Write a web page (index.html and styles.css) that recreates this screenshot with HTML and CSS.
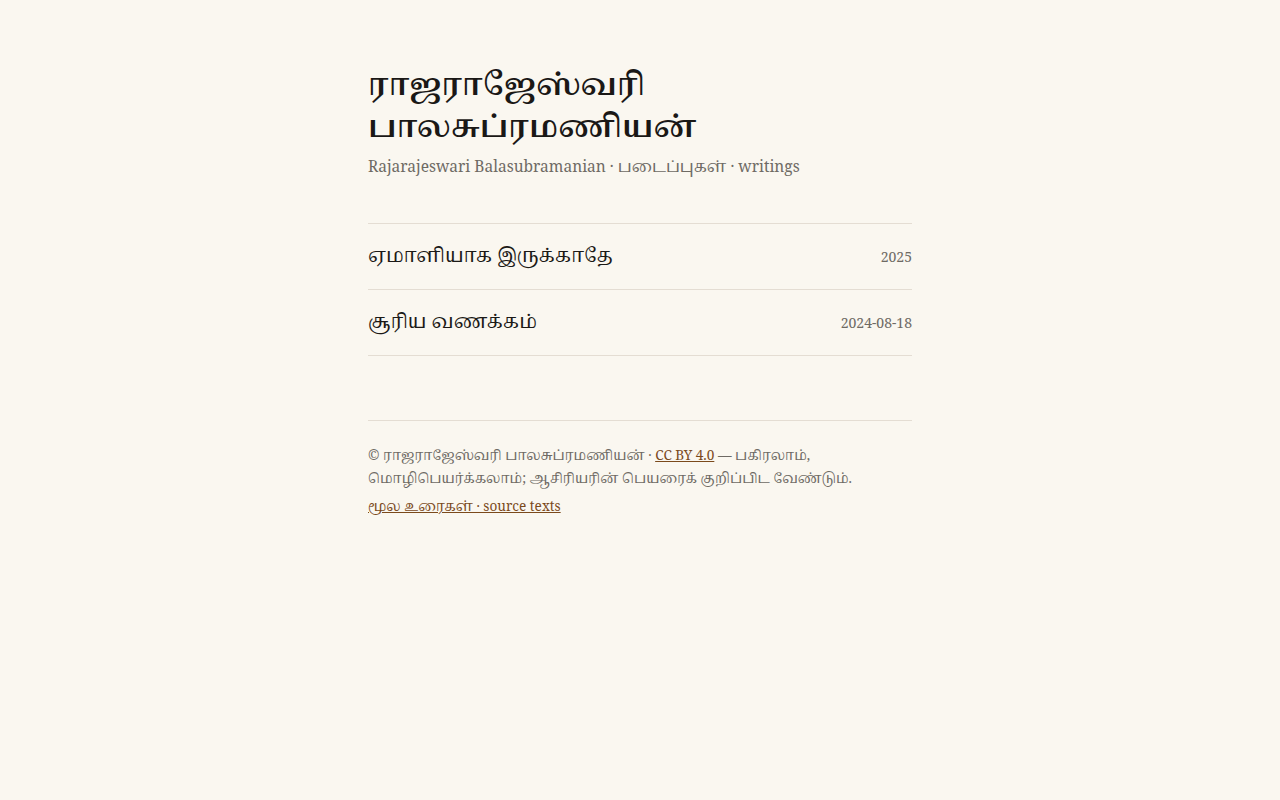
FILE: index.html
```html
<!DOCTYPE html>
<html lang="ta">
<head>
<meta charset="utf-8">
<title>ராஜராஜேஸ்வரி பாலசுப்ரமணியன்</title>
<link rel="stylesheet" href="styles.css">
</head>
<body>
<main class="page">
  <header class="head">
    <h1 class="title">ராஜராஜேஸ்வரி<br>பாலசுப்ரமணியன்</h1>
    <p class="sub">Rajarajeswari Balasubramanian · படைப்புகள் · writings</p>
  </header>
  <ul class="list">
    <li class="row"><a class="row-title" href="#">ஏமாளியாக இருக்காதே</a><span class="date">2025</span></li>
    <li class="row"><a class="row-title" href="#">சூரிய வணக்கம்</a><span class="date">2024-08-18</span></li>
  </ul>
  <footer class="foot">
    <p class="lic">© ராஜராஜேஸ்வரி பாலசுப்ரமணியன் · <a href="#">CC BY 4.0</a> — பகிரலாம், மொழிபெயர்க்கலாம்; ஆசிரியரின் பெயரைக் குறிப்பிட வேண்டும்.</p>
    <p class="src"><a href="#">மூல உரைகள் · source texts</a></p>
  </footer>
</main>
</body>
</html>
```
FILE: styles.css
```css
html, body { margin: 0; padding: 0; }
body {
  background: #faf7f0;
  color: #1c1a17;
  font-family: "Noto Serif", "Noto Serif Tamil", "DejaVu Serif", serif;
}
.page {
  max-width: 544px;
  margin: 0 auto;
  padding: 62px 0 40px;
}
.title {
  margin: 0;
  font-size: 30.5px;
  line-height: 42px;
  font-weight: 600;
  color: #1a1816;
}
.sub {
  margin: 9px 0 0;
  font-size: 15.5px;
  color: #6e6a64;
}
.list {
  list-style: none;
  margin: 43px 0 0;
  padding: 0;
  border-top: 1px solid #e4ddd3;
}
.row {
  display: flex;
  justify-content: space-between;
  align-items: baseline;
  padding: 17px 0 19px;
  height: 29px;
  border-bottom: 1px solid #e4ddd3;
}
.row-title {
  font-size: 19.2px;
  color: #1c1a17;
  text-decoration: none;
}
.date {
  font-size: 14px;
  color: #6e6a64;
}
.foot {
  margin-top: 64px;
  border-top: 1px solid #e4ddd3;
  padding-top: 22px;
  font-size: 13.6px;
  color: #6e6a64;
}
.lic { margin: 0; line-height: 23px; }
.src { margin: 7px 0 0; font-size: 13.6px; }
.foot a { color: #7b4a1c; }
```
